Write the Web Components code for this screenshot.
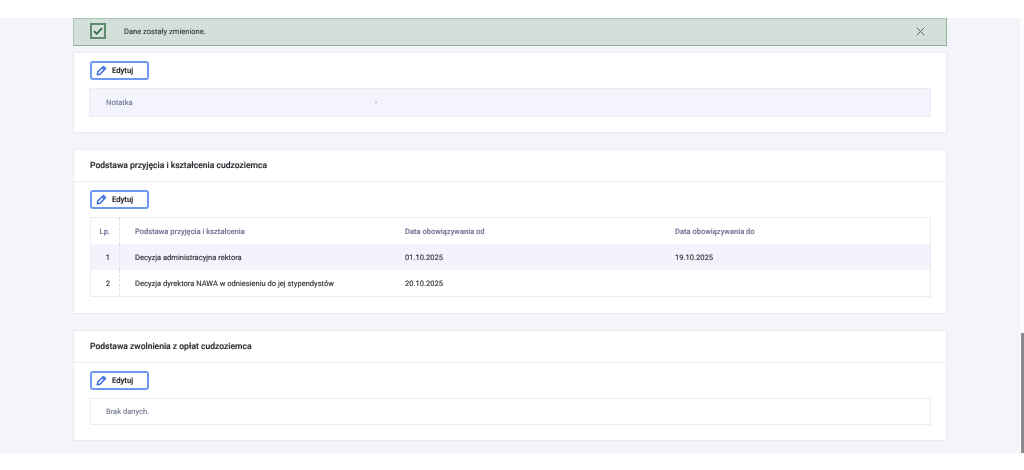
<!DOCTYPE html>
<html lang="pl">
<head>
<meta charset="utf-8">
<title>Dane</title>
<style>
  html, body { margin: 0; padding: 0; background: #fff; }
  body { height: 470px; overflow: hidden; font-family: Roboto, "Liberation Sans", sans-serif; text-rendering: geometricPrecision; -webkit-text-stroke: .15px; }
</style>
</head>
<body>
<app-page>
  <alert-box>Dane zostały zmienione.</alert-box>

  <data-card>
    <edit-button></edit-button>
    <note-row label="Notatka" value="-"></note-row>
  </data-card>

  <data-card heading="Podstawa przyjęcia i kształcenia cudzoziemca">
    <edit-button></edit-button>
    <basis-table></basis-table>
  </data-card>

  <data-card heading="Podstawa zwolnienia z opłat cudzoziemca">
    <edit-button></edit-button>
    <empty-row>Brak danych.</empty-row>
  </data-card>
</app-page>

<script>
// page frame: white strip, grey content area, scrollbar on the right
class AppPage extends HTMLElement {
  constructor() {
    super();
    this.attachShadow({mode: 'open'}).innerHTML = `
      <style>
        :host { display: block; position: relative; padding-top: 18px; height: 452px; }
        main {
          height: 435px;
          margin-right: 4px;
          padding: 0 73px;
          box-sizing: border-box;
          background: #f4f5fa;
          display: flex;
          flex-direction: column;
          gap: 16px;
          filter: blur(.3px);
        }
        .strip { position: absolute; right: 0; top: 18px; width: 4px; height: 435px; background: #fdfdfd; }
        .thumb { position: absolute; right: 0; top: 333px; width: 3px; height: 120px; background: #8a8a8a; }
      </style>
      <main><slot></slot></main>
      <div class="strip"></div>
      <div class="thumb"></div>`;
  }
}

class AlertBox extends HTMLElement {
  constructor() {
    super();
    this.attachShadow({mode: 'open'}).innerHTML = `
      <style>
        :host {
          display: flex; align-items: center;
          height: 28px; box-sizing: border-box;
          margin-bottom: -10px;
          padding: 0 21px 2px 16px;
          background: #d2e0d9;
          border: 1px solid #a9c4b3;
          border-bottom-color: #8fb09b;
          border-right-color: #8fb09b;
          font-size: 7.55px; color: #3c4043;
        }
        .ico {
          width: 16px; height: 16px; box-sizing: border-box;
          border: 2px solid #5f8c70; margin-right: 18px;
          display: flex; align-items: center; justify-content: center;
        }
        .txt { flex: 1; }
      </style>
      <div class="ico"><svg width="10" height="8" viewBox="0 0 10 8"><path d="M1 4.2 3.7 6.8 9 1.2" fill="none" stroke="#356b49" stroke-width="1.8"/></svg></div>
      <span class="txt"><slot></slot></span>
      <svg width="9" height="9" viewBox="0 0 9 9"><path d="M.7.7 8.3 8.3M8.3.7.7 8.3" stroke="#5d6a66" stroke-width="1"/></svg>`;
  }
}

class DataCard extends HTMLElement {
  constructor() {
    super();
    const heading = this.getAttribute('heading');
    this.attachShadow({mode: 'open'}).innerHTML = `
      <style>
        :host {
          display: block; box-sizing: border-box;
          background: #fff; border: 1px solid #ebecf2;
        }
        header {
          height: 32px; box-sizing: border-box;
          border-bottom: 1px solid #ebecf2;
          padding-left: 16px;
          display: flex; align-items: center;
          font-size: 8.55px; font-weight: 500; color: #2b2b33;
        }
        .body { padding: 8px 15px 16px 16px; display: flex; flex-direction: column; gap: 8px; }
      </style>
      ${heading ? `<header>${heading}</header>` : ''}
      <div class="body"><slot></slot></div>`;
  }
}

class EditButton extends HTMLElement {
  constructor() {
    super();
    this.attachShadow({mode: 'open'}).innerHTML = `
      <style>
        :host {
          display: flex; align-items: center;
          width: 59px; height: 19px; box-sizing: border-box;
          border: 2px solid #6e98f2; border-radius: 3px;
          padding-left: 4px;
          font-size: 7.7px; font-weight: 500; color: #26262e;
        }
        svg { margin-right: 5px; }
      </style>
      <svg width="11" height="11" viewBox="0 0 11 11"><path d="M7.4 1.4 9.6 3.6 4 9.3 1.3 9.8 1.7 7.1ZM6.2 2.6 8.4 4.8" fill="none" stroke="#3568de" stroke-width="1.4" stroke-linejoin="round"/></svg>
      <span>Edytuj</span>`;
  }
}

class NoteRow extends HTMLElement {
  constructor() {
    super();
    this.attachShadow({mode: 'open'}).innerHTML = `
      <style>
        :host {
          display: grid; grid-template-columns: 269px 1fr; align-items: center;
          height: 29px; box-sizing: border-box;
          margin: 0 0 -1px -1px;
          padding-left: 16px;
          background: #f3f4fc; border: 1px solid #ebecf2;
          font-size: 7.55px; color: #737a98;
        }
      </style>
      <span>${this.getAttribute('label')}</span><span>${this.getAttribute('value')}</span>`;
  }
}

class EmptyRow extends HTMLElement {
  constructor() {
    super();
    this.attachShadow({mode: 'open'}).innerHTML = `
      <style>
        :host {
          display: flex; align-items: center;
          height: 27px; box-sizing: border-box;
          margin-bottom: -1px;
          padding-left: 15px;
          border: 1px solid #ebecf2;
          font-size: 7.55px; color: #7c8096;
        }
      </style>
      <slot></slot>`;
  }
}

const rows = [
  ['1', 'Decyzja administracyjna rektora', '01.10.2025', '19.10.2025'],
  ['2', 'Decyzja dyrektora NAWA w odniesieniu do jej stypendystów', '20.10.2025', '']
];

class BasisTable extends HTMLElement {
  constructor() {
    super();
    this.attachShadow({mode: 'open'}).innerHTML = `
      <style>
        :host { display: block; border: 1px solid #ebecf2; font-size: 7.55px; color: #33343c; }
        .row {
          display: grid; grid-template-columns: 29px 270px 270px 1fr;
          height: 26px; align-items: stretch;
        }
        .row > span { display: flex; align-items: center; padding-left: 15px; }
        .row > span:first-child {
          padding: 0 9px 0 0; justify-content: flex-end;
          border-right: 1px dashed #dfe1ea;
        }
        .head { color: #737a98; font-weight: 500; }
        .odd { background: #f3f4fb; }
      </style>
      <div class="row head">
        <span>Lp.</span><span>Podstawa przyjęcia i kształcenia</span><span>Data obowiązywania od</span><span>Data obowiązywania do</span>
      </div>
      ${rows.map((r, i) => `<div class="row ${i % 2 ? '' : 'odd'}">${r.map(c => `<span>${c}</span>`).join('')}</div>`).join('')}`;
  }
}

customElements.define('app-page', AppPage);
customElements.define('alert-box', AlertBox);
customElements.define('data-card', DataCard);
customElements.define('edit-button', EditButton);
customElements.define('note-row', NoteRow);
customElements.define('empty-row', EmptyRow);
customElements.define('basis-table', BasisTable);
</script>
</body>
</html>
